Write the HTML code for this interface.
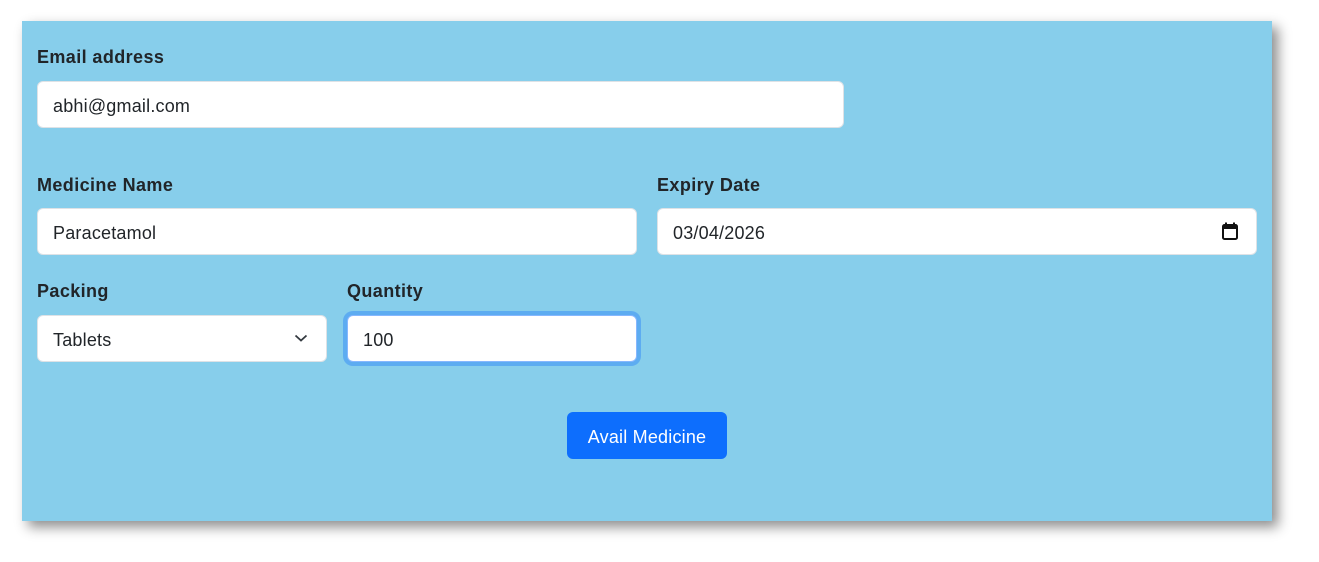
<!DOCTYPE html>
<html><head><style>
body{margin:0;background:#fff;width:1319px;height:562px;position:relative;font-family:"Liberation Sans",sans-serif;color:#212529;}
.panel{position:absolute;left:22px;top:21px;width:1250px;height:500px;background:#87ceeb;box-shadow:6px 6px 12px rgba(0,0,0,.45);}
.lbl{position:absolute;font-weight:bold;font-size:18px;line-height:22px;letter-spacing:0.4px;}
.in{position:absolute;box-sizing:border-box;height:47px;background:#fff;border:1px solid #dee2e6;border-radius:6px;font-size:18px;line-height:49px;padding-left:15px;letter-spacing:0.2px;}
.btn{position:absolute;left:545px;top:391px;width:160px;height:47px;background:#0d6efd;color:#fff;border-radius:6px;font-size:18px;line-height:50px;text-align:center;letter-spacing:0.2px;}
</style></head><body>
<div class="panel">
<div class="lbl" style="left:15px;top:25px">Email address</div>
<div class="in" style="left:15px;top:60px;width:807px">abhi@gmail.com</div>
<div class="lbl" style="left:15px;top:153px">Medicine Name</div>
<div class="in" style="left:15px;top:187px;width:600px">Paracetamol</div>
<div class="lbl" style="left:635px;top:153px">Expiry Date</div>
<div class="in" style="left:635px;top:187px;width:600px">03/04/2026
<svg style="position:absolute;right:18px;top:13px" width="16" height="18" viewBox="0 0 16 18"><rect x="1" y="3" width="14" height="14" rx="1.5" fill="none" stroke="#111" stroke-width="2"/><rect x="1" y="3" width="14" height="4" fill="#111"/><rect x="3" y="0.5" width="2" height="3" fill="#111"/><rect x="11" y="0.5" width="2" height="3" fill="#111"/></svg></div>
<div class="lbl" style="left:15px;top:259px">Packing</div>
<div class="in" style="left:15px;top:294px;width:290px">Tablets
<svg style="position:absolute;right:18px;top:17px" width="14" height="10" viewBox="0 0 14 10"><path d="M1.5 2.5L7 7.5L12.5 2.5" fill="none" stroke="#343a40" stroke-width="1.8"/></svg></div>
<div class="lbl" style="left:325px;top:259px">Quantity</div>
<div class="in" style="left:325px;top:294px;width:290px;border-color:#86b7fe;box-shadow:0 0 0 4px rgba(13,110,253,.35)">100</div>
<div class="btn">Avail Medicine</div>
</div>
</body></html>
